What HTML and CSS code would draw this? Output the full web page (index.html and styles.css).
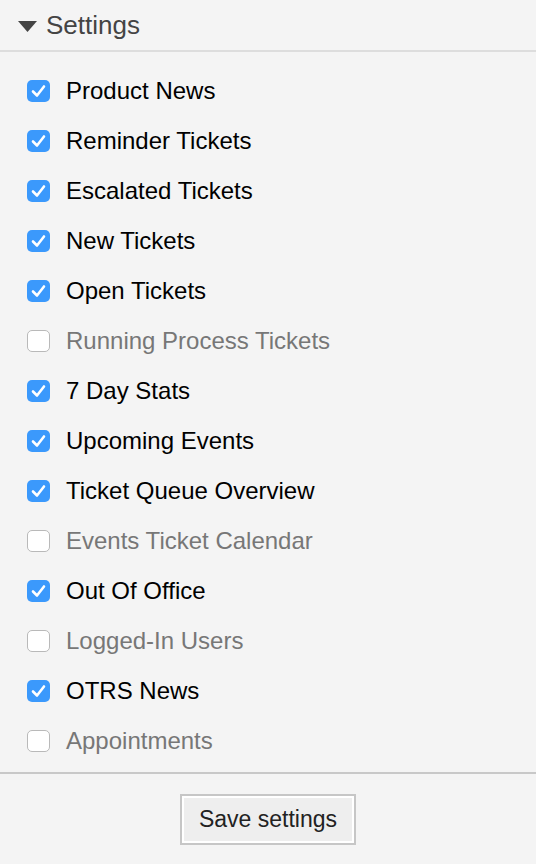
FILE: index.html
```html
<!DOCTYPE html>
<html>
<head>
<meta charset="utf-8">
<link rel="stylesheet" href="styles.css">
</head>
<body>
<div class="panel">
  <div class="header">
    <svg class="caret" width="19" height="11" viewBox="0 0 19 11"><polygon points="0,0 19,0 9.5,11" fill="#444"/></svg>
    <span class="title">Settings</span>
  </div>
  <ul class="list">
    <li class="row on"><span class="box"><svg viewBox="0 0 23 22" width="23" height="22"><polyline points="6,11.5 10,15.5 17,6.5" fill="none" stroke="#fff" stroke-width="2.6" stroke-linecap="round" stroke-linejoin="round"/></svg></span><span class="label">Product News</span></li>
    <li class="row on"><span class="box"><svg viewBox="0 0 23 22" width="23" height="22"><polyline points="6,11.5 10,15.5 17,6.5" fill="none" stroke="#fff" stroke-width="2.6" stroke-linecap="round" stroke-linejoin="round"/></svg></span><span class="label">Reminder Tickets</span></li>
    <li class="row on"><span class="box"><svg viewBox="0 0 23 22" width="23" height="22"><polyline points="6,11.5 10,15.5 17,6.5" fill="none" stroke="#fff" stroke-width="2.6" stroke-linecap="round" stroke-linejoin="round"/></svg></span><span class="label">Escalated Tickets</span></li>
    <li class="row on"><span class="box"><svg viewBox="0 0 23 22" width="23" height="22"><polyline points="6,11.5 10,15.5 17,6.5" fill="none" stroke="#fff" stroke-width="2.6" stroke-linecap="round" stroke-linejoin="round"/></svg></span><span class="label">New Tickets</span></li>
    <li class="row on"><span class="box"><svg viewBox="0 0 23 22" width="23" height="22"><polyline points="6,11.5 10,15.5 17,6.5" fill="none" stroke="#fff" stroke-width="2.6" stroke-linecap="round" stroke-linejoin="round"/></svg></span><span class="label">Open Tickets</span></li>
    <li class="row off"><span class="box"></span><span class="label">Running Process Tickets</span></li>
    <li class="row on"><span class="box"><svg viewBox="0 0 23 22" width="23" height="22"><polyline points="6,11.5 10,15.5 17,6.5" fill="none" stroke="#fff" stroke-width="2.6" stroke-linecap="round" stroke-linejoin="round"/></svg></span><span class="label">7 Day Stats</span></li>
    <li class="row on"><span class="box"><svg viewBox="0 0 23 22" width="23" height="22"><polyline points="6,11.5 10,15.5 17,6.5" fill="none" stroke="#fff" stroke-width="2.6" stroke-linecap="round" stroke-linejoin="round"/></svg></span><span class="label">Upcoming Events</span></li>
    <li class="row on"><span class="box"><svg viewBox="0 0 23 22" width="23" height="22"><polyline points="6,11.5 10,15.5 17,6.5" fill="none" stroke="#fff" stroke-width="2.6" stroke-linecap="round" stroke-linejoin="round"/></svg></span><span class="label">Ticket Queue Overview</span></li>
    <li class="row off"><span class="box"></span><span class="label">Events Ticket Calendar</span></li>
    <li class="row on"><span class="box"><svg viewBox="0 0 23 22" width="23" height="22"><polyline points="6,11.5 10,15.5 17,6.5" fill="none" stroke="#fff" stroke-width="2.6" stroke-linecap="round" stroke-linejoin="round"/></svg></span><span class="label">Out Of Office</span></li>
    <li class="row off"><span class="box"></span><span class="label">Logged-In Users</span></li>
    <li class="row on"><span class="box"><svg viewBox="0 0 23 22" width="23" height="22"><polyline points="6,11.5 10,15.5 17,6.5" fill="none" stroke="#fff" stroke-width="2.6" stroke-linecap="round" stroke-linejoin="round"/></svg></span><span class="label">OTRS News</span></li>
    <li class="row off"><span class="box"></span><span class="label">Appointments</span></li>
  </ul>
  <div class="footer">
    <button class="save">Save settings</button>
  </div>
</div>
</body>
</html>
```

FILE: styles.css
```css
html, body {
  margin: 0;
  padding: 0;
  background: #f4f4f4;
}
body {
  font-family: "Liberation Sans", Arial, sans-serif;
}
.panel {
  width: 536px;
  height: 864px;
  background: #f4f4f4;
}
.header {
  height: 50px;
  display: flex;
  align-items: center;
  padding-left: 18px;
  border-bottom: 2px solid #dddddd;
  box-sizing: content-box;
}
.caret {
  display: block;
  margin-top: 2px;
}
.title {
  margin-left: 9px;
  font-size: 26px;
  color: #444444;
  line-height: 30px;
}
.list {
  list-style: none;
  margin: 0;
  padding: 14px 0 6px 0;
}
.row {
  height: 50px;
  display: flex;
  align-items: center;
  padding-left: 27px;
}
.box {
  width: 23px;
  height: 22px;
  border-radius: 5px;
  box-sizing: border-box;
  display: flex;
  flex-shrink: 0;
}
.box svg {
  display: block;
}
.on .box {
  background: #3b99fc;
}
.off .box {
  background: #ffffff;
  border: 1px solid #b9b9b9;
}
.label {
  margin-left: 16px;
  font-size: 24px;
  line-height: 28px;
}
.on .label {
  color: #000000;
}
.off .label {
  color: #777777;
}
.footer {
  border-top: 2px solid #c8c8c8;
  display: flex;
  justify-content: center;
  padding-top: 20px;
}
.save {
  width: 176px;
  height: 51px;
  border: 2px solid #c6c6c6;
  box-shadow: inset 0 0 0 2px #ffffff;
  background: #eeeeee;
  font-family: "Liberation Sans", Arial, sans-serif;
  font-size: 23px;
  color: #222222;
  padding: 0;
  margin: 0;
}
```
